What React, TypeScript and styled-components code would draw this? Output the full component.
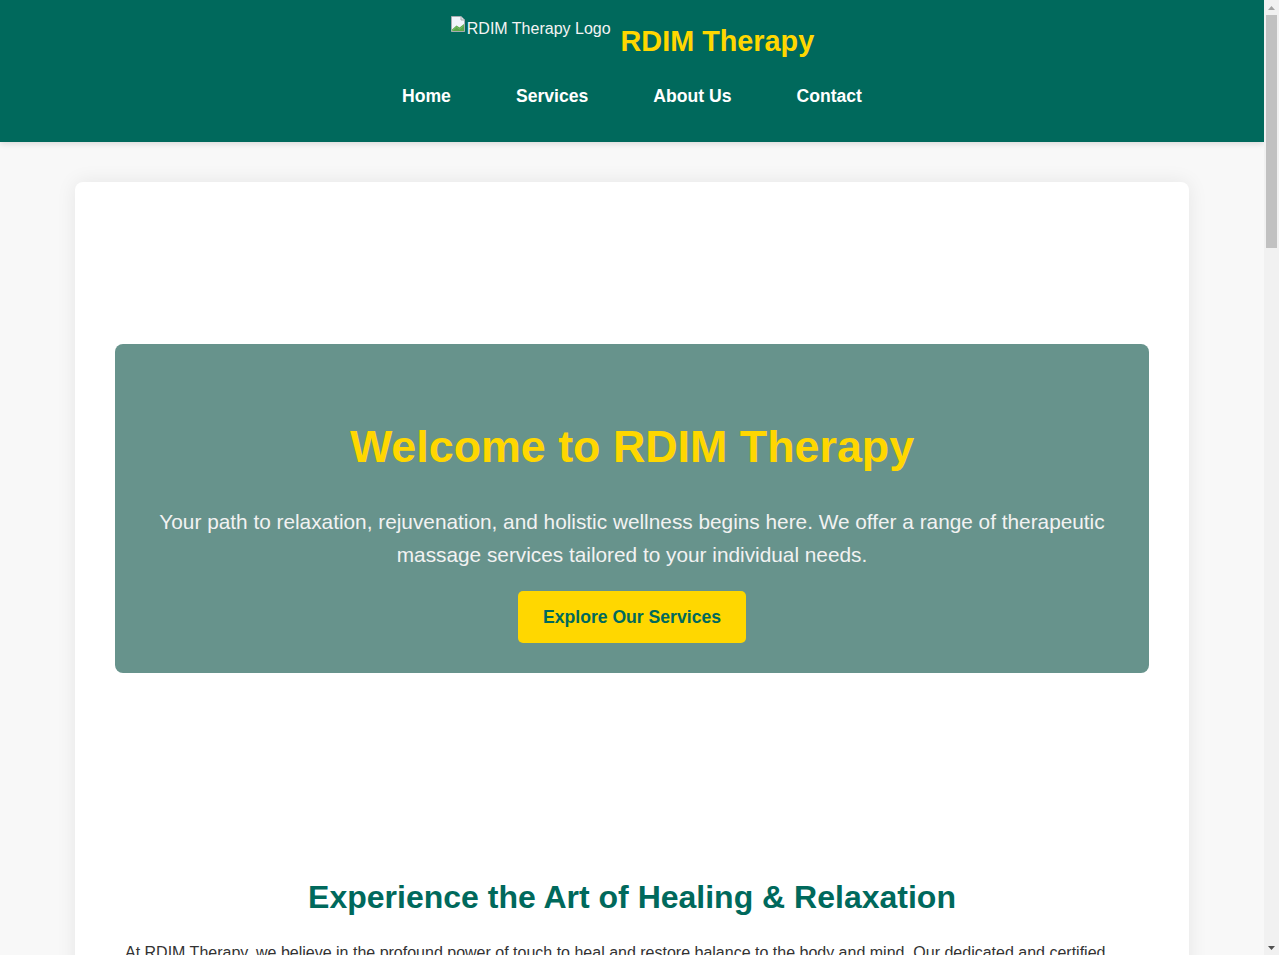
import React from 'react';
import styled, { createGlobalStyle } from 'styled-components';

const GlobalStyle = createGlobalStyle`
  html, body {
    margin: 0;
    padding: 0;
    overflow: hidden;
  }
  body {
    font-family: 'Liberation Sans', Arial, sans-serif;
    background: #f8f8f8;
    color: #333;
    line-height: 1.6;
  }
`;

const Viewport = styled.div`
  display: flex;
  height: 100vh;
`;

const Page = styled.div`
  flex: 1;
  min-width: 0;
  overflow-y: auto;
  scrollbar-width: none;
  &::-webkit-scrollbar {
    display: none;
  }
`;

/* the browser scrollbar, drawn */
const ScrollBar = styled.div`
  width: 15px;
  flex-shrink: 0;
  background: #f1f1f1;
  display: flex;
  flex-direction: column;
`;

const ScrollArrow = styled.div<{ $down?: boolean }>`
  height: 15px;
  display: flex;
  align-items: center;
  justify-content: center;
  color: ${p => (p.$down ? '#505050' : '#a3a3a3')};
`;

const ScrollTrack = styled.div`
  flex: 1;
  padding: 0 2px;
`;

const ScrollThumb = styled.div`
  height: 233px;
  background: #c1c1c1;
`;

const Header = styled.header`
  background: #00695c;
  padding: 16px 0 25px;
  box-shadow: 0 2px 6px rgba(0, 0, 0, 0.12);
`;

const LogoRow = styled.div`
  display: flex;
  justify-content: center;
  align-items: center;
  gap: 10px;
`;

const LogoImg = styled.span`
  display: inline-flex;
  align-items: flex-start;
  gap: 1px;
  height: 50px;
  font-size: 16px;
  line-height: 18px;
  color: #f4f4f4;
`;

const AltText = styled.span`
  margin-top: 4px;
`;

const SiteTitle = styled.h1`
  margin: 2px 0 0;
  font-size: 28.8px;
  line-height: 1.15;
  font-weight: 700;
  color: #ffd700;
`;

const Nav = styled.nav`
  display: flex;
  justify-content: center;
  gap: 65px;
  margin-top: 10px;
`;

const NavLink = styled.a`
  color: #fff;
  font-size: 17.6px;
  font-weight: 700;
  line-height: 21px;
  padding: 10px 0;
  text-decoration: none;
  cursor: pointer;
`;

const Main = styled.main`
  padding: 40px 0 60px;
`;

const Card = styled.div`
  max-width: 1034px;
  margin: 0 auto;
  padding: 40px;
  background: #fff;
  border-radius: 8px;
  box-shadow: 0 0 20px rgba(0, 0, 0, 0.08);
`;

const Hero = styled.section`
  margin-top: 122px;
  background: #67938c;
  border-radius: 8px;
  padding: 77px 40px 30px;
  text-align: center;
  color: #f2f2f2;
`;

const HeroTitle = styled.h2`
  margin: 0 0 32px;
  font-size: 44.8px;
  line-height: 1.15;
  font-weight: 700;
  color: #ffd700;
`;

const HeroText = styled.p`
  margin: 0 0 20px;
  font-size: 20.8px;
  line-height: 33px;
`;

const CtaButton = styled.a`
  display: inline-block;
  background: #ffd700;
  color: #00695c;
  font-size: 17.6px;
  font-weight: 700;
  line-height: 22px;
  padding: 15px 25px;
  border-radius: 5px;
  text-decoration: none;
  cursor: pointer;
`;

const Section = styled.section<{ $top?: number }>`
  margin-top: ${p => p.$top ?? 80}px;
`;

const SectionTitle = styled.h2`
  margin: 0 0 25px;
  font-size: 32px;
  line-height: 1.15;
  font-weight: 700;
  color: #00695c;
  text-align: center;
`;

const Para = styled.p`
  margin: 0 0 18px;
  padding: 0 10px;
  font-size: 16px;
  line-height: 25.6px;
  color: #333;
`;

const ServiceGrid = styled.div`
  display: grid;
  grid-template-columns: repeat(3, 1fr);
  gap: 30px;
  margin-top: 30px;
`;

const ServiceCard = styled.div`
  background: #f4f8f7;
  border-radius: 8px;
  border-top: 4px solid #00695c;
  padding: 28px 24px;
  min-height: 170px;
`;

const ServiceName = styled.h3`
  margin: 0 0 12px;
  font-size: 21px;
  color: #00695c;
`;

const ServiceText = styled.p`
  margin: 0;
  font-size: 16px;
  line-height: 26px;
  color: #444;
`;

const Quote = styled.blockquote`
  margin: 0 0 24px;
  padding: 24px 30px;
  background: #f4f8f7;
  border-left: 5px solid #ffd700;
  border-radius: 6px;
  font-size: 18px;
  font-style: italic;
  color: #444;
`;

const QuoteAuthor = styled.span`
  display: block;
  margin-top: 10px;
  font-style: normal;
  font-weight: 700;
  color: #00695c;
  font-size: 16px;
`;

const ContactBox = styled.div`
  text-align: center;
  padding: 40px;
  border-radius: 8px;
  background: #00695c;
  color: #fff;
  font-size: 18px;
`;

const Footer = styled.footer`
  background: #00695c;
  color: #fff;
  text-align: center;
  padding: 30px 0;
  font-size: 15px;
`;

const BrokenImageIcon = () => (
  <svg width="16" height="16" viewBox="0 0 16 16">
    <path d="M1.5 0.5h9.5l3.5 3.5v11.5h-13z" fill="#f1f5fb" stroke="#a8acb0" />
    <path d="M11 0.5v3.5h3.5" fill="#dfe3e8" stroke="#a8acb0" />
    <path d="M2 13.5l4.5-4 3 2 4.5-3.5v7h-12z" fill="#5aa64a" />
    <path d="M2 15l4.5-4 3 2 4.5-3.5" fill="none" stroke="#7cc46a" strokeWidth="0.8" />
  </svg>
);

const Arrow = ({ down }: { down?: boolean }) => (
  <svg width="7" height="4" viewBox="0 0 7 4">
    <path d={down ? 'M0 0h7L3.5 4z' : 'M0 4h7L3.5 0z'} fill="currentColor" />
  </svg>
);

const services = [
  ['Swedish Massage', 'A gentle, flowing massage that eases tension, improves circulation and leaves you deeply relaxed.'],
  ['Deep Tissue Massage', 'Focused pressure on deeper muscle layers to release chronic knots and stubborn tension.'],
  ['Hot Stone Therapy', 'Smooth heated stones melt away stress and warm tight muscles for a soothing experience.'],
  ['Aromatherapy', 'Essential oils chosen for your needs combine with massage to calm the mind and lift the spirit.'],
  ['Sports Massage', 'Designed for active bodies to aid recovery, prevent injury and improve flexibility.'],
  ['Reflexology', 'Pressure applied to points on the feet and hands to promote balance throughout the body.'],
];

const App: React.FC = () => (
  <>
    <GlobalStyle />
    <Viewport>
      <Page>
        <Header>
          <LogoRow>
            <LogoImg role="img" aria-label="RDIM Therapy Logo">
              <BrokenImageIcon />
              <AltText>RDIM Therapy Logo</AltText>
            </LogoImg>
            <SiteTitle>RDIM Therapy</SiteTitle>
          </LogoRow>
          <Nav>
            <NavLink>Home</NavLink>
            <NavLink>Services</NavLink>
            <NavLink>About Us</NavLink>
            <NavLink>Contact</NavLink>
          </Nav>
        </Header>

        <Main>
          <Card>
            <Hero>
              <HeroTitle>Welcome to RDIM Therapy</HeroTitle>
              <HeroText>
                Your path to relaxation, rejuvenation, and holistic wellness begins here. We offer a range of
                therapeutic massage services tailored to your individual needs.
              </HeroText>
              <CtaButton>Explore Our Services</CtaButton>
            </Hero>

            <Section $top={206}>
              <SectionTitle>Experience the Art of Healing &amp; Relaxation</SectionTitle>
              <Para>
                At RDIM Therapy, we believe in the profound power of touch to heal and restore balance to the body and
                mind. Our dedicated and certified therapists combine time-honoured techniques with a modern
                understanding of the body to create treatments that meet you exactly where you are.
              </Para>
              <Para>
                Whether you are looking to unwind after a demanding week, recover from an injury, or simply make
                self-care part of your routine, our calm and welcoming space is designed to help you slow down,
                breathe deeply and reconnect with yourself.
              </Para>
              <Para>
                Every session begins with a short consultation so that we can understand your goals, any areas of
                discomfort and your preferred pressure. From there, we tailor each treatment to you.
              </Para>
            </Section>

            <Section>
              <SectionTitle>Our Services</SectionTitle>
              <ServiceGrid>
                {services.map(([name, text]) => (
                  <ServiceCard key={name}>
                    <ServiceName>{name}</ServiceName>
                    <ServiceText>{text}</ServiceText>
                  </ServiceCard>
                ))}
              </ServiceGrid>
            </Section>

            <Section>
              <SectionTitle>What Our Clients Say</SectionTitle>
              <Quote>
                “The most relaxing hour of my month. I leave every appointment feeling lighter and more at ease.”
                <QuoteAuthor>— Sarah M.</QuoteAuthor>
              </Quote>
              <Quote>
                “After years of back pain, the deep tissue sessions have made a real difference. Highly recommended.”
                <QuoteAuthor>— David K.</QuoteAuthor>
              </Quote>
              <Quote>
                “Warm, professional and attentive. The hot stone therapy is simply wonderful.”
                <QuoteAuthor>— Priya L.</QuoteAuthor>
              </Quote>
            </Section>

            <Section>
              <ContactBox>
                Ready to book your session? Call us or send a message and we will find a time that suits you.
              </ContactBox>
            </Section>
          </Card>
        </Main>

        <Footer>&copy; 2024 RDIM Therapy. All rights reserved.</Footer>
      </Page>
      <ScrollBar>
        <ScrollArrow>
          <Arrow />
        </ScrollArrow>
        <ScrollTrack>
          <ScrollThumb />
        </ScrollTrack>
        <ScrollArrow $down>
          <Arrow down />
        </ScrollArrow>
      </ScrollBar>
    </Viewport>
  </>
);

export default App;
